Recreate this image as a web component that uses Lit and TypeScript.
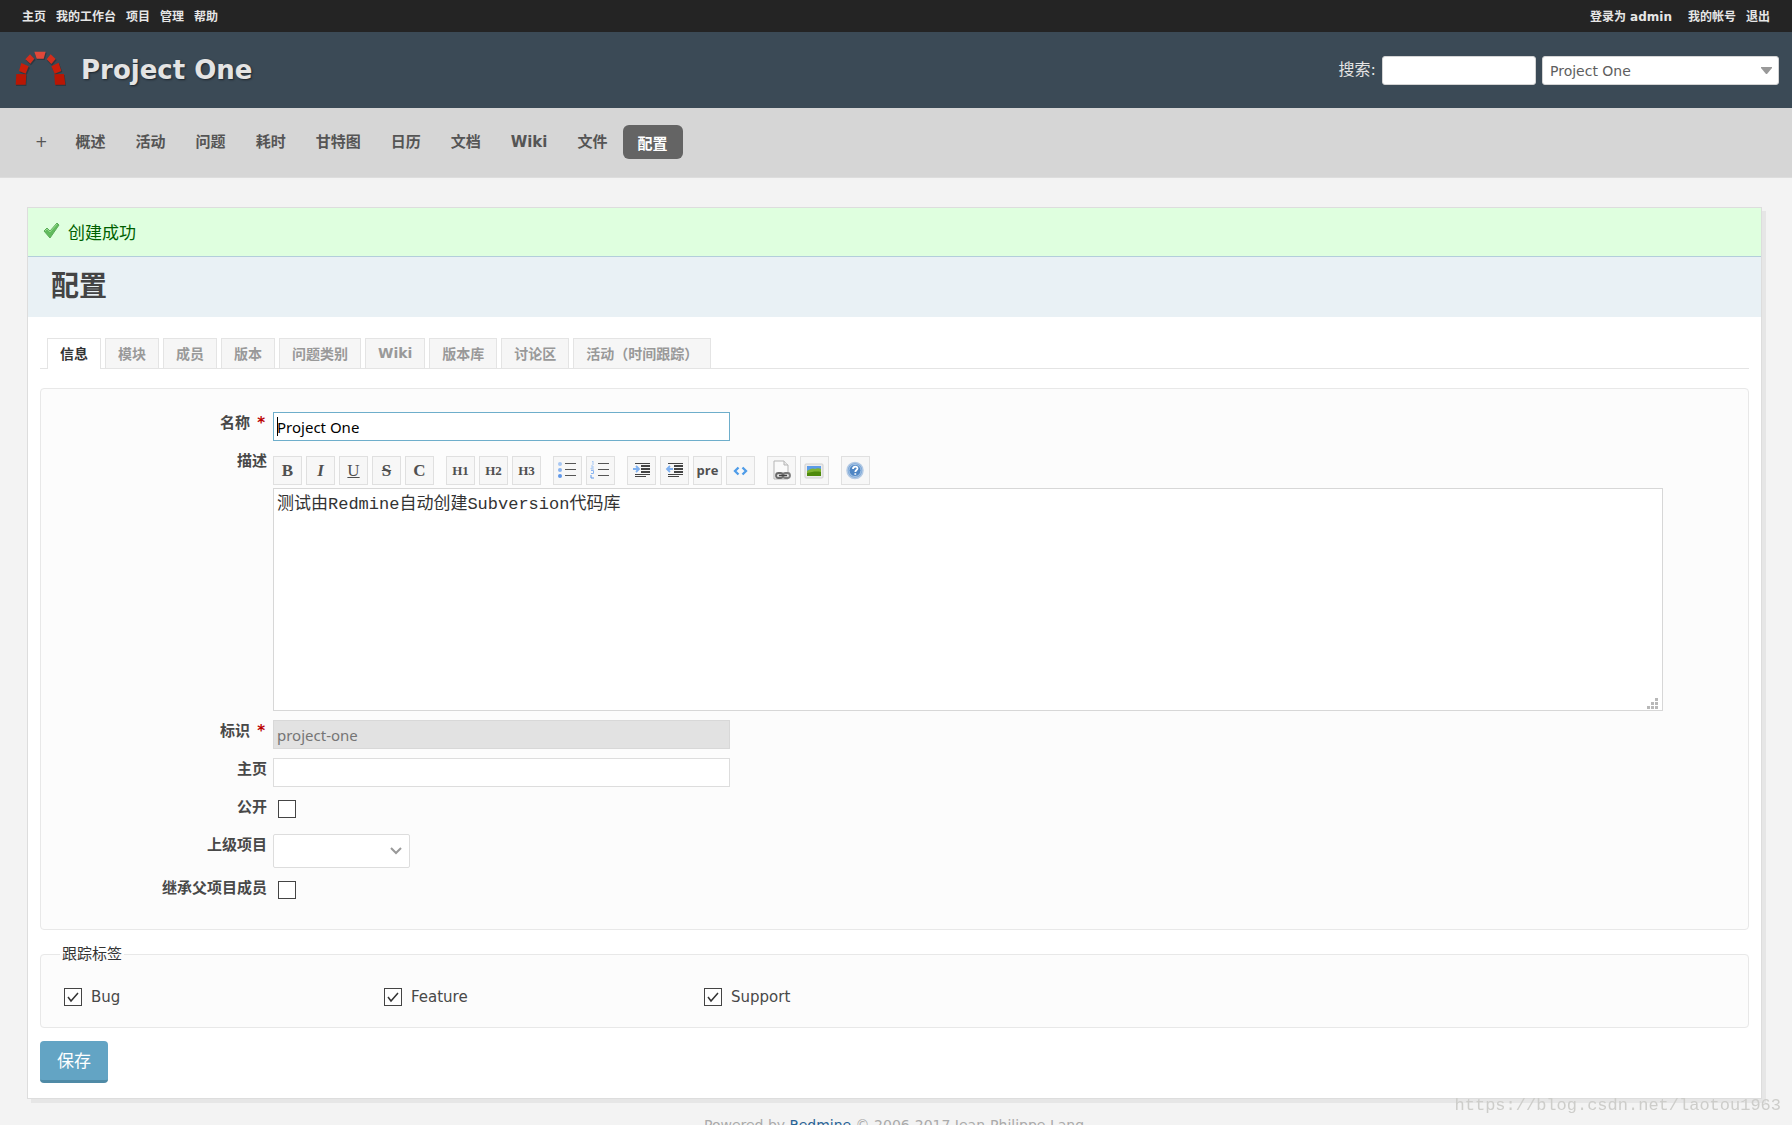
import { LitElement, html, svg, css } from "lit";
import { customElement, state } from "lit/decorators.js";

const bullets = [5, 11, 17];

const listLines = svg`${bullets.map(
  (y) => svg`<rect x="8" y=${y - 2} width="11" height="1" fill="#555"/>`
)}`;

const indentLines = svg`
  <path d="M4 3h15v1H4zM4 14h15v1H4zM4 16h11v1H4z" fill="#444"/>
  <path d="M10 5h9v2h-9zM10 8h9v2h-9zM10 11h9v2h-9z" fill="#444"/>`;

const icons: Record<string, unknown> = {
  ul: svg`${bullets.map((y, i) => svg`<circle cx="3" cy=${y - 1} r="2" fill=${["#a8c8f4", "#8ab4f0", "#5f97e8"][i]}/>`)}${listLines}`,
  ol: svg`
    <path d="M2 2l1-1v4M1 6h2v2H1v1h3" fill="none" stroke="#a8c8f4"/>
    <path d="M1 10.500h2.500v3H1" fill="none" stroke="#8ab4f0"/>
    <path d="M1 15v3h3" fill="none" stroke="#5f97e8"/>${listLines}`,
  indent: svg`${indentLines}<path d="M2 9h5M5 6l3 3-3 3" fill="none" stroke="#7eb0f0" stroke-width="1.800"/>`,
  outdent: svg`${indentLines}<path d="M9 9H4M6 6L3 9l3 3" fill="none" stroke="#7eb0f0" stroke-width="1.800"/>`,
  code: svg`<path d="M8.500 7.500L5 11l3.500 3.500M12.500 7.500L16 11l-3.500 3.500" fill="none" stroke="#4f9ce8" stroke-width="2.300"/>`,
  link: svg`
    <path d="M3 1h10l4 4v14H3z" fill="#fafafa" stroke="#b5b5b5" stroke-linejoin="round"/>
    <path d="M13 1v4h4" fill="#e8e8e8" stroke="#b5b5b5"/>
    <rect x="5" y="13" width="7" height="5" rx="2.500" fill="#ddd" stroke="#6a6a6a" stroke-width="1.800"/>
    <rect x="12" y="13" width="7" height="5" rx="2.500" fill="#ddd" stroke="#7a7a7a" stroke-width="1.800"/>
    <path d="M8 15.500h8" stroke="#444" stroke-width="1.500"/>`,
  image: svg`
    <rect x="1" y="4" width="18" height="14" rx="1" fill="#ececec" stroke="#cfcfcf"/>
    <rect x="3" y="6" width="14" height="10" fill="#5b9be8"/>
    <path d="M3 11c3-2 5-3 8-2 2-1 4-1 6 0v7H3z" fill="#7fb432"/>
    <path d="M3 13c5-1 9-2 14-1v4H3z" fill="#4f8a0c"/>`,
  help: svg`
    <circle cx="10" cy="10.500" r="8" fill="#7fa9d8" stroke="#b4cae4" stroke-width="1.500"/>
    <circle cx="10" cy="10.500" r="6" fill="#4f86c4" stroke="#a8c6e6" stroke-width="1"/>
    <path d="M8 9c0-3 4.500-3 4.500-.5 0 1.500-2.200 1.500-2.200 3.500M10.300 13.200v1.600" fill="none" stroke="#fff" stroke-width="1.800"/>`,
};

interface Tool {
  title: string;
  icon?: string;
  text?: string;
  kind?: string;
}

const toolGroups: Tool[][] = [
  [
    { title: "粗体", text: "B", kind: "bold" },
    { title: "斜体", text: "I", kind: "italic" },
    { title: "下划线", text: "U", kind: "under" },
    { title: "删除线", text: "S", kind: "strike" },
    { title: "代码", text: "C", kind: "bold" },
  ],
  [
    { title: "标题 1", text: "H1", kind: "heading" },
    { title: "标题 2", text: "H2", kind: "heading" },
    { title: "标题 3", text: "H3", kind: "heading" },
  ],
  [
    { title: "无序列表", icon: "ul" },
    { title: "有序列表", icon: "ol" },
  ],
  [
    { title: "引用", icon: "indent" },
    { title: "取消引用", icon: "outdent" },
    { title: "预格式文本", text: "pre", kind: "pre" },
    { title: "代码块", icon: "code" },
  ],
  [
    { title: "Wiki 链接", icon: "link" },
    { title: "图片", icon: "image" },
  ],
  [{ title: "帮助", icon: "help" }],
];

@customElement("app-root")
export class AppRoot extends LitElement {
  @state() private tab = "信息";

  private menu = ["概述", "活动", "问题", "耗时", "甘特图", "日历", "文档", "Wiki", "文件", "配置"];
  private tabs = ["信息", "模块", "成员", "版本", "问题类别", "Wiki", "版本库", "讨论区", "活动（时间跟踪）"];
  private trackers = ["Bug", "Feature", "Support"];

  static styles = css`
    :host {
      display: block;
      min-height: 100vh;
      background: #f3f3f3;
      color: #484848;
      font-family: "DejaVu Sans", Verdana, "Noto Sans CJK SC", sans-serif;
      font-size: 15px;
      line-height: 22px;
    }
    * {
      box-sizing: border-box;
    }
    a {
      color: inherit;
      text-decoration: none;
    }
    .top {
      display: flex;
      justify-content: space-between;
      height: 32px;
      padding: 0 22px;
      background: #242424;
      color: #e6e6e6;
      font-size: 12px;
      font-weight: bold;
      line-height: 34px;
    }
    .links {
      display: flex;
      gap: 10px;
    }
    .who {
      margin-right: 6px;
    }
    .header {
      display: flex;
      align-items: center;
      height: 76px;
      padding: 0 13px 0 10px;
      background: #3b4a56;
      color: #e4e4e4;
    }
    .logo {
      width: 64px;
      height: 48px;
      margin: 0 7px 4px 0;
    }
    .title {
      flex: 1;
      margin: 0;
      font-size: 26px;
      line-height: 32px;
      text-shadow: 1px 1px 2px #1c242b;
    }
    .search {
      display: flex;
      align-items: center;
      gap: 6px;
      font-size: 16px;
    }
    .search input,
    .search select {
      height: 29px;
      border: 1px solid #d4d4d4;
      border-radius: 3px;
      background: #fff;
      color: #5e5e5e;
      font-family: inherit;
      font-size: 14px;
    }
    .search input {
      width: 154px;
    }
    .pick {
      display: grid;
      align-items: center;
    }
    .pick > * {
      grid-area: 1 / 1;
    }
    .pick svg {
      justify-self: end;
      margin-right: 7px;
      pointer-events: none;
    }
    .pick select {
      appearance: none;
      width: 237px;
      padding: 2px 7px 0;
    }
    .menu {
      display: flex;
      align-items: center;
      height: 70px;
      padding-left: 22px;
      border-bottom: 1px solid #ddd;
      background: #d6d6d6;
      color: #555;
      font-weight: bold;
    }
    .menu a {
      padding: 4px 15px 6px;
      border-radius: 6px;
      line-height: 24px;
    }
    .menu .plus {
      padding: 4px 13px 6px;
    }
    .menu .plus {
      font-weight: normal;
    }
    .menu .current {
      margin-bottom: 2px;
      padding: 7px 15px 3px;
      background: #646464;
      color: #fff;
    }
    .content {
      margin: 29px 30px 0 27px;
      border: 1px solid #ddd;
      background: #fff;
      box-shadow: 4px 4px 0 #e6e6e6;
    }
    .flash {
      display: flex;
      align-items: center;
      gap: 8px;
      height: 49px;
      padding: 2px 0 0 15px;
      border-bottom: 1px solid #b3cedb;
      background: #dfffdf;
      color: #005f00;
      font-size: 17px;
    }
    .flash svg {
      margin-bottom: 6px;
    }
    h2 {
      margin: 0;
      padding: 14px 23px;
      background: #e9f1f5;
      color: #444;
      font-size: 28px;
      line-height: 32px;
    }
    .body {
      padding: 21px 12px 15px;
    }
    .tabs {
      display: flex;
      align-items: flex-end;
      gap: 4px;
      padding-left: 7px;
      border-bottom: 1px solid #e4e4e4;
    }
    .tab {
      height: 30px;
      padding: 0 12px 1px;
      border: 1px solid #e4e4e4;
      border-bottom: 0;
      background: #f6f6f6;
      color: #999;
      font-family: inherit;
      font-size: 14px;
      font-weight: bold;
    }
    .tab.on {
      height: 31px;
      margin-bottom: -1px;
      padding-bottom: 2px;
      background: #fff;
      color: #333;
    }
    .box {
      display: grid;
      gap: 9px;
      margin-top: 19px;
      padding: 23px 85px 23px 0;
      border: 1px solid #e8e8e8;
      border-radius: 4px;
      background: #fcfcfc;
    }
    .row {
      display: grid;
      grid-template-columns: 226px 1fr;
      gap: 6px;
      min-height: 29px;
      align-items: start;
    }
    .row > label {
      font-weight: bold;
      text-align: right;
    }
    .req {
      margin: 0 2px;
      color: #bb0000;
    }
    .text {
      width: 457px;
      height: 29px;
      padding: 0 3px;
      border: 1px solid #ddd;
      outline: none;
      background: #fff;
      color: #000;
      font-family: "Noto Sans", "Noto Sans CJK SC", sans-serif;
      font-size: 15px;
    }
    .text.active {
      border-color: #6eaecb;
      background: linear-gradient(#000, #000) 3px 4px / 1px 19px no-repeat #fff;
    }
    .text:disabled {
      border-color: #d8d8d8;
      background: #e2e2e2;
      color: #757575;
    }
    .tools {
      display: flex;
      gap: 12px;
      margin: 6px 0 3px;
    }
    .group {
      display: flex;
      gap: 4px;
    }
    .tool {
      display: flex;
      align-items: center;
      justify-content: center;
      width: 29px;
      height: 29px;
      padding: 0;
      border: 1px solid #e0e0e0;
      background: #f7f7f7;
      color: #505050;
      font-family: "Liberation Serif", serif;
      font-size: 17px;
    }
    .bold,
    .strike {
      font-weight: bold;
    }
    .italic {
      font-style: italic;
      font-weight: bold;
    }
    .under {
      text-decoration: underline;
    }
    .strike {
      text-decoration: line-through;
    }
    .heading {
      font-size: 13px;
      font-weight: bold;
    }
    .pre {
      padding-bottom: 2px;
      font-family: "Open Sans", sans-serif;
      font-size: 13px;
      font-weight: bold;
    }
    .area {
      display: grid;
    }
    .area > * {
      grid-area: 1 / 1;
    }
    .area svg {
      place-self: end;
      margin: 0 5px 2px 0;
      pointer-events: none;
    }
    textarea {
      width: 100%;
      height: 223px;
      padding: 4px 3px;
      border: 1px solid #d7d7d7;
      outline: none;
      resize: none;
      background: #fff;
      color: #333;
      font-family: "Liberation Mono", "Noto Sans CJK SC", monospace;
      font-size: 17px;
      line-height: 24px;
    }
    .check {
      appearance: none;
      flex: none;
      width: 18px;
      height: 18px;
      margin: 4px 5px;
      border: 1px solid #444;
      background: #fff;
    }
    .parent {
      width: 137px;
    }
    .parent select {
      appearance: none;
      width: 100%;
      height: 34px;
      border: 1px solid #ddd;
      border-radius: 2px;
      background: #fff;
    }
    fieldset {
      margin: 13px 0 0;
      padding: 21px 0 19px 23px;
      border: 1px solid #e8e8e8;
      border-radius: 4px;
      background: #fcfcfc;
    }
    legend {
      margin-left: -4px;
      padding: 0 2px;
      color: #333;
      background: linear-gradient(#fff 50%, #fcfcfc 50%);
    }
    .trackers {
      display: flex;
      min-width: 0;
    }
    .tracker {
      display: flex;
      align-items: center;
      flex: 0 0 320px;
      gap: 9px;
    }
    .tick {
      display: grid;
    }
    .tick > * {
      grid-area: 1 / 1;
      margin: 0;
    }
    .tick svg {
      pointer-events: none;
      visibility: hidden;
    }
    .tick input:checked + svg {
      visibility: visible;
    }
    .save {
      display: block;
      height: 42px;
      margin-top: 13px;
      padding: 0 17px 2px;
      border: 0;
      border-bottom: 3px solid #4f8aa6;
      border-radius: 4px;
      background: #63a4c4;
      color: #fff;
      font-family: inherit;
      font-size: 17px;
    }
    .footer {
      padding: 15px 4px 14px 0;
      color: #aaa;
      font-size: 14px;
      text-align: center;
    }
    .footer a {
      color: #2a6496;
    }
    .mark {
      position: fixed;
      right: 11px;
      bottom: 8px;
      color: #cdcdca;
      font-family: "Liberation Mono", monospace;
      font-size: 17px;
    }
  `;

  private renderTool(t: Tool) {
    return html`<button type="button" class="tool ${t.kind ?? ""}" title=${t.title} aria-label=${t.title}>
      ${t.icon ? html`<svg width="21" height="21" viewBox="0 0 21 21">${icons[t.icon]}</svg>` : t.text}
    </button>`;
  }

  render() {
    return html`
      <div class="top">
        <nav class="links">
          ${["主页", "我的工作台", "项目", "管理", "帮助"].map((t) => html`<a href="#">${t}</a>`)}
        </nav>
        <div class="links">
          <span class="who">登录为 <a href="#">admin</a></span>
          <a href="#">我的帐号</a><a href="#">退出</a>
        </div>
      </div>
      <header class="header">
        <svg class="logo" viewBox="0 0 192 144">
          <g fill="#1f262c" opacity=".5" transform="translate(2 3)">
            <path d="M19 90l30 1-2 32H16zM133 91l29-1 4 33h-31zM34 57l24 11-10 22-21-8zM124 68l22-12 9 25-21 8zM60 31l15 14-14 16-16-15zM122 31l16 14-14 17-15-15zM72 23h36l-6 22H79z" />
          </g>
          <path d="M19 90l30 1-2 31H17zM133 91l29-1 4 32h-31z" fill="#b91603" />
          <path d="M34 57l22 10-9 22-20-8zM124 67l22-11 8 25-20 8z" fill="#c81e0a" />
          <path d="M60 31l13 13-12 15-15-13zM122 31l15 14-13 15-14-14z" fill="#d22e1c" />
          <path d="M73 23h34l-6 21H80z" fill="#e0483a" />
        </svg>
        <h1 class="title">Project One</h1>
        <form class="search">
          <label for="q">搜索:</label>
          <input id="q" type="text" />
          <span class="pick">
            <select aria-label="项目"><option>Project One</option></select>
            <svg width="11" height="7" viewBox="0 0 11 7"><path d="M0 0h11v1L6 7H5L0 1z" fill="#999" /></svg>
          </span>
        </form>
      </header>
      <nav class="menu">
        <a class="plus" href="#">+</a>
        ${this.menu.map((m) => html`<a href="#" class=${m === "配置" ? "current" : ""}>${m}</a>`)}
      </nav>
      <main class="content">
        <div class="flash">
          <svg width="17" height="17" viewBox="0 0 17 17">
            <path d="M1 9l3-3 3 3 7-8 2 2-9 13z" fill="#62bb5e" stroke="#5bab58" stroke-linejoin="round" />
            <path d="M2 9l2-2 3 3 7-8" fill="none" stroke="#93dc8c" />
          </svg>
          创建成功
        </div>
        <h2>配置</h2>
        <div class="body">
          <div class="tabs">
            ${this.tabs.map(
              (t) => html`<button type="button" class="tab ${t === this.tab ? "on" : ""}" @click=${() => (this.tab = t)}>${t}</button>`
            )}
          </div>
          <div class="box">
            <div class="row">
              <label for="name">名称<span class="req"> *</span></label>
              <input id="name" class="text active" type="text" .value=${"Project One"} />
            </div>
            <div class="row">
              <label for="desc">描述</label>
              <div>
                <div class="tools">
                  ${toolGroups.map((g) => html`<div class="group">${g.map((t) => this.renderTool(t))}</div>`)}
                </div>
                <div class="area">
                  <textarea id="desc" .value=${"测试由Redmine自动创建Subversion代码库"}></textarea>
                  <svg width="11" height="11" viewBox="0 0 11 11">
                    <path d="M8 0h3v3H8zM4 4h3v3H4zM8 4h3v3H8zM0 8h3v3H0zM4 8h3v3H4zM8 8h3v3H8z" fill="#b8b8b8" />
                  </svg>
                </div>
              </div>
            </div>
            <div class="row">
              <label for="ident">标识<span class="req"> *</span></label>
              <input id="ident" class="text" type="text" disabled .value=${"project-one"} />
            </div>
            <div class="row">
              <label for="home">主页</label>
              <input id="home" class="text" type="text" />
            </div>
            <div class="row">
              <label for="public">公开</label>
              <input id="public" class="check" type="checkbox" />
            </div>
            <div class="row">
              <label for="parent">上级项目</label>
              <span class="pick parent">
                <select id="parent"><option></option></select>
                <svg width="13" height="8" viewBox="0 0 13 8"><path d="M1 1l5 5 5-5" fill="none" stroke="#999" stroke-width="2" /></svg>
              </span>
            </div>
            <div class="row">
              <label for="inherit">继承父项目成员</label>
              <input id="inherit" class="check" type="checkbox" />
            </div>
          </div>
          <fieldset>
            <legend>跟踪标签</legend>
            <div class="trackers">
              ${this.trackers.map(
                (t) => html`<label class="tracker">
                  <span class="tick">
                    <input class="check" type="checkbox" checked />
                    <svg width="18" height="18" viewBox="0 0 18 18"><path d="M4 9l3 4 7-8" fill="none" stroke="#333" stroke-width="1.500" /></svg>
                  </span>
                  ${t}
                </label>`
              )}
            </div>
          </fieldset>
          <button type="button" class="save">保存</button>
        </div>
      </main>
      <footer class="footer">Powered by <a href="#">Redmine</a> © 2006-2017 Jean-Philippe Lang</footer>
      <div class="mark">https://blog.csdn.net/laotou1963</div>
    `;
  }
}
